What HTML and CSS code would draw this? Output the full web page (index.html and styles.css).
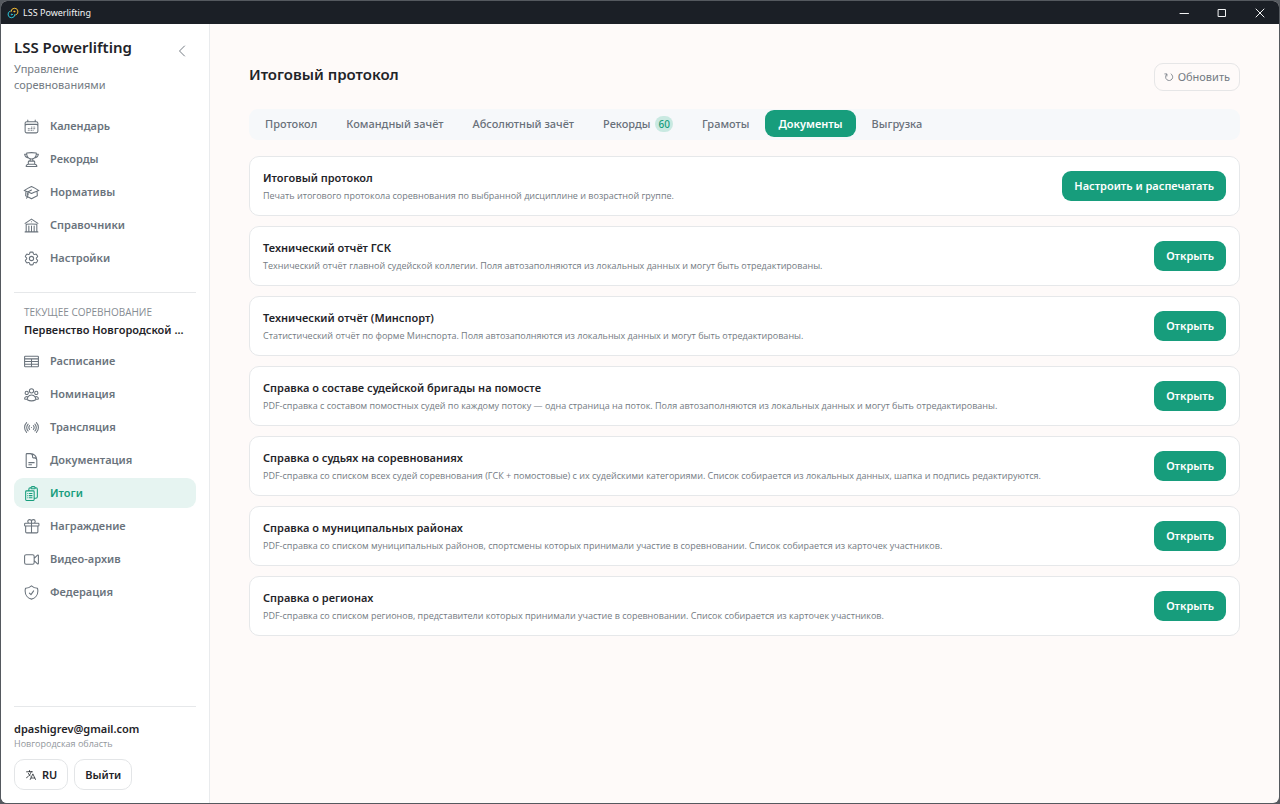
FILE: index.html
```html
<!DOCTYPE html>
<html lang="ru">
  <head>
    <meta charset="utf-8">
    <title>LSS Powerlifting</title>
    <link rel="stylesheet" href="styles.css">
  </head>
  <body>
    <div class="window">
      <header class="titlebar">
        <svg class="app-logo" viewBox="0 0 24 24">
          <path stroke="#f5bd35" d="M8 9a7 7 0 1 1 9.500 7"/>
          <path stroke="#2bc4d8" d="M16 15A7 7 0 1 1 6.500 8"/>
          <circle cx="14.500" cy="9" r="1" stroke="#f5bd35"/>
          <circle cx="9.500" cy="15" r="1" stroke="#2bc4d8"/>
        </svg>
        <span class="app-name">LSS Powerlifting</span>
        <div class="window-buttons">
          <button class="window-button" aria-label="Свернуть">
            <svg viewBox="0 0 10 10"><path d="M1 5.500h8.500"/></svg>
          </button>
          <button class="window-button" aria-label="Развернуть">
            <svg viewBox="0 0 10 10"><path d="M1.500 1.500h7v7h-7z"/></svg>
          </button>
          <button class="window-button" aria-label="Закрыть">
            <svg viewBox="0 0 10 10"><path d="M1 1l8 8M9 1L1 9"/></svg>
          </button>
        </div>
      </header>

      <div class="layout">
        <aside class="sidebar">
          <div class="brand">
            <div>
              <div class="brand-name">LSS Powerlifting</div>
              <div class="brand-text">Управление соревнованиями</div>
            </div>
            <button class="collapse-button" aria-label="Скрыть меню">
              <svg viewBox="0 0 24 24"><path d="M15.750 19.500 8.250 12l7.500-7.500"/></svg>
            </button>
          </div>

          <nav class="menu">
            <a class="menu-link" href="#">
              <svg viewBox="0 0 24 24"><path d="M6.75 3v2.25M17.25 3v2.25M3 18.75V7.5a2.25 2.25 0 0 1 2.25-2.25h13.5A2.25 2.25 0 0 1 21 7.5v11.25m-18 0A2.25 2.25 0 0 0 5.25 21h13.5A2.25 2.25 0 0 0 21 18.75m-18 0v-7.5A2.25 2.25 0 0 1 5.25 9h13.5A2.25 2.25 0 0 1 21 11.25v7.5"/><path d="M12 12.75h.01M12 15h.01M12 17.25h.01M9.75 15h.01M9.75 17.25h.01M7.5 15h.01M7.5 17.25h.01M14.25 12.75h.01M14.25 15h.01M14.25 17.25h.01M16.5 12.75h.01M16.5 15h.01"/></svg>
              Календарь
            </a>
            <a class="menu-link" href="#">
              <svg viewBox="0 0 24 24"><path d="M16.5 18.75h-9m9 0a3 3 0 0 1 3 3h-15a3 3 0 0 1 3-3m9 0v-3.375c0-.621-.503-1.125-1.125-1.125h-.871M7.5 18.75v-3.375c0-.621.504-1.125 1.125-1.125h.872m5.007 0H9.497m5.007 0a7.454 7.454 0 0 1-.982-3.172M9.497 14.25a7.454 7.454 0 0 0 .981-3.172M5.25 4.236c-.982.143-1.954.317-2.916.52A6.003 6.003 0 0 0 7.73 9.728M5.25 4.236V4.5c0 2.108.966 3.99 2.48 5.228M5.25 4.236V2.721C7.456 2.41 9.71 2.25 12 2.25c2.291 0 4.545.16 6.75.47v1.516M7.73 9.728a6.726 6.726 0 0 0 2.748 1.35m8.272-6.842V4.5c0 2.108-.966 3.99-2.48 5.228m2.48-5.492a46.32 46.32 0 0 1 2.916.52 6.003 6.003 0 0 1-5.395 4.972m0 0a6.726 6.726 0 0 1-2.749 1.35m0 0a6.772 6.772 0 0 1-3.044 0"/></svg>
              Рекорды
            </a>
            <a class="menu-link" href="#">
              <svg viewBox="0 0 24 24"><path d="M4.26 10.147a60.438 60.438 0 0 0-.491 6.347A48.62 48.62 0 0 1 12 20.904a48.62 48.62 0 0 1 8.232-4.41 60.46 60.46 0 0 0-.491-6.347m-15.482 0a50.636 50.636 0 0 0-2.658-.813A59.906 59.906 0 0 1 12 3.493a59.903 59.903 0 0 1 10.399 5.84c-.896.248-1.783.52-2.658.814m-15.482 0A50.717 50.717 0 0 1 12 13.489a50.702 50.702 0 0 1 7.74-3.342M6.75 15a.75.75 0 1 0 0-1.5.75.75 0 0 0 0 1.5Zm0 0v-3.675A55.378 55.378 0 0 1 12 8.443m-7.007 11.55A5.981 5.981 0 0 0 6.75 15.75v-1.5"/></svg>
              Нормативы
            </a>
            <a class="menu-link" href="#">
              <svg viewBox="0 0 24 24"><path d="M12 21v-8.25M15.75 21v-8.25M8.25 21v-8.25M3 9l9-6 9 6m-1.5 12V10.332A48.36 48.36 0 0 0 12 9.75c-2.551 0-5.056.2-7.5.582V21M3 21h18M12 6.75h.008v.008H12V6.75Z"/></svg>
              Справочники
            </a>
            <a class="menu-link" href="#">
              <svg viewBox="0 0 24 24"><path d="M9.594 3.94c.09-.542.56-.94 1.11-.94h2.593c.55 0 1.02.398 1.11.94l.213 1.281c.063.374.313.686.645.87.074.04.147.083.22.127.325.196.72.257 1.075.124l1.217-.456a1.125 1.125 0 0 1 1.37.49l1.296 2.247a1.125 1.125 0 0 1-.26 1.431l-1.003.827c-.293.241-.438.613-.43.992a7.723 7.723 0 0 1 0 .255c-.008.378.137.75.43.991l1.004.827c.424.35.534.955.26 1.43l-1.298 2.247a1.125 1.125 0 0 1-1.369.491l-1.217-.456c-.355-.133-.75-.072-1.076.124a6.47 6.47 0 0 1-.22.128c-.331.183-.581.495-.644.869l-.213 1.281c-.09.543-.56.94-1.11.94h-2.594c-.55 0-1.019-.398-1.11-.94l-.213-1.281c-.062-.374-.312-.686-.644-.87a6.52 6.52 0 0 1-.22-.127c-.325-.196-.72-.257-1.076-.124l-1.217.456a1.125 1.125 0 0 1-1.369-.49l-1.297-2.247a1.125 1.125 0 0 1 .26-1.431l1.004-.827c.292-.24.437-.613.43-.991a6.932 6.932 0 0 1 0-.255c.007-.38-.138-.751-.43-.992l-1.004-.827a1.125 1.125 0 0 1-.26-1.43l1.297-2.247a1.125 1.125 0 0 1 1.37-.491l1.216.456c.356.133.751.072 1.076-.124.072-.044.146-.086.22-.128.332-.183.582-.495.644-.869l.214-1.28Z"/><path d="M15 12a3 3 0 1 1-6 0 3 3 0 0 1 6 0Z"/></svg>
              Настройки
            </a>
          </nav>

          <div class="current">
            <div class="current-label">Текущее соревнование</div>
            <div class="current-name">Первенство Новгородской ...</div>
          </div>

          <nav class="menu">
            <a class="menu-link" href="#">
              <svg viewBox="0 0 24 24"><path d="M2.250 5.500c0-.6.500-1 1-1h17.500c.6 0 1 .4 1 1v13c0 .6-.4 1-1 1H3.250c-.6 0-1-.4-1-1zM2.250 8.250h19.500M2.250 12h19.500M2.250 15.750h19.500M12 8.250V19.500"/></svg>
              Расписание
            </a>
            <a class="menu-link" href="#">
              <svg viewBox="0 0 24 24"><path d="M18 18.72a9.094 9.094 0 0 0 3.741-.479 3 3 0 0 0-4.682-2.72m.94 3.198.001.031c0 .225-.012.447-.037.666A11.944 11.944 0 0 1 12 21c-2.17 0-4.207-.576-5.963-1.584A6.062 6.062 0 0 1 6 18.719m12 0a5.971 5.971 0 0 0-.941-3.197m0 0A5.995 5.995 0 0 0 12 12.75a5.995 5.995 0 0 0-5.058 2.772m0 0a3 3 0 0 0-4.681 2.72 8.986 8.986 0 0 0 3.74.477m.94-3.197a5.971 5.971 0 0 0-.94 3.197M15 6.75a3 3 0 1 1-6 0 3 3 0 0 1 6 0Zm6 3a2.25 2.25 0 1 1-4.5 0 2.25 2.25 0 0 1 4.5 0Zm-13.5 0a2.25 2.25 0 1 1-4.5 0 2.25 2.25 0 0 1 4.5 0Z"/></svg>
              Номинация
            </a>
            <a class="menu-link" href="#">
              <svg viewBox="0 0 24 24"><path d="M9.348 14.652a3.75 3.75 0 0 1 0-5.304m5.304 0a3.75 3.75 0 0 1 0 5.304m-7.425 2.121a6.75 6.75 0 0 1 0-9.546m9.546 0a6.75 6.75 0 0 1 0 9.546M5.106 18.894c-3.808-3.807-3.808-9.98 0-13.788m13.788 0c3.808 3.807 3.808 9.98 0 13.788M12 12h.008v.008H12V12Z"/></svg>
              Трансляция
            </a>
            <a class="menu-link" href="#">
              <svg viewBox="0 0 24 24"><path d="M19.5 14.25v-2.625a3.375 3.375 0 0 0-3.375-3.375h-1.5A1.125 1.125 0 0 1 13.5 7.125v-1.5a3.375 3.375 0 0 0-3.375-3.375H8.25m0 12.75h7.5m-7.5 3H12M10.5 2.25H5.625c-.621 0-1.125.504-1.125 1.125v17.25c0 .621.504 1.125 1.125 1.125h12.75c.621 0 1.125-.504 1.125-1.125V11.25a9 9 0 0 0-9-9Z"/></svg>
              Документация
            </a>
            <a class="menu-link active" href="#">
              <svg viewBox="0 0 24 24"><path d="M9 12h3.75M9 15h3.75M9 18h3.75m3 .75H18a2.25 2.25 0 0 0 2.25-2.25V6.108c0-1.135-.845-2.098-1.976-2.192a48.424 48.424 0 0 0-1.123-.08m-5.801 0c-.065.21-.1.433-.1.664 0 .414.336.75.75.75h4.5a.75.75 0 0 0 .75-.75 2.25 2.25 0 0 0-.1-.664m-5.8 0A2.251 2.251 0 0 1 13.5 2.25H15c1.012 0 1.867.668 2.15 1.586m-5.8 0c-.376.023-.75.05-1.124.08C9.095 4.01 8.25 4.973 8.25 6.108V8.25m0 0H4.875c-.621 0-1.125.504-1.125 1.125v11.25c0 .621.504 1.125 1.125 1.125h9.75c.621 0 1.125-.504 1.125-1.125V9.375c0-.621-.504-1.125-1.125-1.125H8.25ZM6.75 12h.008v.008H6.75V12Zm0 3h.008v.008H6.75V15Zm0 3h.008v.008H6.75V18Z"/></svg>
              Итоги
            </a>
            <a class="menu-link" href="#">
              <svg viewBox="0 0 24 24"><path d="M21 11.25v8.25a1.5 1.5 0 0 1-1.5 1.5H5.25a1.5 1.5 0 0 1-1.5-1.5v-8.25M12 4.875A2.625 2.625 0 1 0 9.375 7.5H12m0-2.625V7.5m0-2.625A2.625 2.625 0 1 1 14.625 7.5H12m0 0V21m-8.625-9.75h18c.621 0 1.125-.504 1.125-1.125v-1.5c0-.621-.504-1.125-1.125-1.125h-18c-.621 0-1.125.504-1.125 1.125v1.5c0 .621.504 1.125 1.125 1.125Z"/></svg>
              Награждение
            </a>
            <a class="menu-link" href="#">
              <svg viewBox="0 0 24 24"><path d="m15.75 10.5 4.72-4.72a.75.75 0 0 1 1.28.53v11.38a.75.75 0 0 1-1.28.53l-4.72-4.72M4.5 18.75h9a2.25 2.25 0 0 0 2.25-2.25v-9a2.25 2.25 0 0 0-2.25-2.25h-9A2.25 2.25 0 0 0 2.25 7.5v9a2.25 2.25 0 0 0 2.25 2.25Z"/></svg>
              Видео-архив
            </a>
            <a class="menu-link" href="#">
              <svg viewBox="0 0 24 24"><path d="M9 12.75 11.25 15 15 9.75m-3-7.036A11.959 11.959 0 0 1 3.598 6 11.99 11.99 0 0 0 3 9.749c0 5.592 3.824 10.29 9 11.623 5.176-1.332 9-6.03 9-11.622 0-1.31-.21-2.571-.598-3.751h-.152c-3.196 0-6.1-1.248-8.25-3.285Z"/></svg>
              Федерация
            </a>
          </nav>

          <div class="user">
            <div class="user-email">dpashigrev@gmail.com</div>
            <div class="user-region">Новгородская область</div>
            <div class="user-buttons">
              <button class="user-button">
                <svg viewBox="0 0 24 24"><path d="m10.5 21 5.25-11.25L21 21m-9-3h7.5M3 5.621a48.474 48.474 0 0 1 6-.371m0 0c1.12 0 2.233.038 3.334.114M9 5.25V3m3.334 2.364C11.176 10.658 7.69 15.08 3 17.502m9.334-12.138c.896.061 1.785.147 2.666.257m-4.589 8.495a18.023 18.023 0 0 1-3.827-5.802"/></svg>
                RU
              </button>
              <button class="user-button">Выйти</button>
            </div>
          </div>
        </aside>

        <main class="content">
          <div class="page-header">
            <h1>Итоговый протокол</h1>
            <button class="refresh-button">
              <svg viewBox="0 0 12 12"><path d="M8.500 2.300A4.300 4.300 0 1 1 3 3M1 2.300h2.500v2.500"/></svg>
              Обновить
            </button>
          </div>

          <div class="tabs">
            <button class="tab">Протокол</button>
            <button class="tab">Командный зачёт</button>
            <button class="tab">Абсолютный зачёт</button>
            <button class="tab">Рекорды <span class="badge">60</span></button>
            <button class="tab">Грамоты</button>
            <button class="tab active">Документы</button>
            <button class="tab">Выгрузка</button>
          </div>

          <div class="cards">
            <section class="card">
              <div>
                <h2>Итоговый протокол</h2>
                <p>Печать итогового протокола соревнования по выбранной дисциплине и возрастной группе.</p>
              </div>
              <button class="card-button">Настроить и распечатать</button>
            </section>
            <section class="card">
              <div>
                <h2>Технический отчёт ГСК</h2>
                <p>Технический отчёт главной судейской коллегии. Поля автозаполняются из локальных данных и могут быть отредактированы.</p>
              </div>
              <button class="card-button">Открыть</button>
            </section>
            <section class="card">
              <div>
                <h2>Технический отчёт (Минспорт)</h2>
                <p>Статистический отчёт по форме Минспорта. Поля автозаполняются из локальных данных и могут быть отредактированы.</p>
              </div>
              <button class="card-button">Открыть</button>
            </section>
            <section class="card">
              <div>
                <h2>Справка о составе судейской бригады на помосте</h2>
                <p>PDF-справка с составом помостных судей по каждому потоку — одна страница на поток. Поля автозаполняются из локальных данных и могут быть отредактированы.</p>
              </div>
              <button class="card-button">Открыть</button>
            </section>
            <section class="card">
              <div>
                <h2>Справка о судьях на соревнованиях</h2>
                <p>PDF-справка со списком всех судей соревнования (ГСК + помостовые) с их судейскими категориями. Список собирается из локальных данных, шапка и подпись редактируются.</p>
              </div>
              <button class="card-button">Открыть</button>
            </section>
            <section class="card">
              <div>
                <h2>Справка о муниципальных районах</h2>
                <p>PDF-справка со списком муниципальных районов, спортсмены которых принимали участие в соревновании. Список собирается из карточек участников.</p>
              </div>
              <button class="card-button">Открыть</button>
            </section>
            <section class="card">
              <div>
                <h2>Справка о регионах</h2>
                <p>PDF-справка со списком регионов, представители которых принимали участие в соревновании. Список собирается из карточек участников.</p>
              </div>
              <button class="card-button">Открыть</button>
            </section>
          </div>
        </main>
      </div>
    </div>
  </body>
</html>
```

FILE: styles.css
```css
* {
  box-sizing: border-box;
}

body {
  margin: 0;
  padding: 1px;
  min-height: 100vh;
  display: flex;
  background-color: #55595f;
  color: #1f2429;
  font-family: "Noto Sans", sans-serif;
  font-size: 11px;
  line-height: 16px;
}

h1, h2, p {
  margin: 0;
}

button {
  font: inherit;
  color: inherit;
  cursor: pointer;
}

svg {
  flex: none;
  fill: none;
  stroke: currentColor;
  stroke-width: 1.5;
  stroke-linecap: round;
  stroke-linejoin: round;
}

.window {
  flex: 1;
  display: flex;
  flex-direction: column;
  border-radius: 6px;
  overflow: hidden;
  background-color: #fefaf9;
}

/* title bar */

.titlebar {
  display: flex;
  align-items: center;
  height: 23px;
  padding-left: 6px;
  gap: 4px;
  background-color: #1b1f26;
  color: #f2f3f4;
}

.app-logo {
  width: 12px;
  height: 12px;
  stroke-width: 2;
}

.app-name {
  font-size: 9px;
}

.window-buttons {
  display: flex;
  margin-left: auto;
}

.window-button {
  display: flex;
  align-items: center;
  justify-content: center;
  width: 38px;
  height: 23px;
  padding: 0;
  border: none;
  background-color: transparent;
}

.window-button svg {
  width: 10px;
  height: 10px;
  stroke-width: 1;
}

/* sidebar */

.layout {
  flex: 1;
  display: flex;
}

.sidebar {
  flex: none;
  display: flex;
  flex-direction: column;
  width: 209px;
  padding: 12px 13px 13px;
  background-color: white;
  border-right: 1px solid #e9ebed;
}

.brand {
  display: flex;
  justify-content: space-between;
  margin-bottom: 18px;
}

.brand-name {
  margin-bottom: 3px;
  font-size: 15px;
  font-weight: 600;
  line-height: 22px;
}

.brand-text {
  width: 120px;
  color: #747b83;
}

.collapse-button {
  display: flex;
  align-items: center;
  justify-content: center;
  width: 28px;
  height: 30px;
  padding: 0;
  border: none;
  background-color: transparent;
  color: #747b83;
}

.collapse-button svg {
  width: 16px;
  height: 16px;
}

.menu {
  display: flex;
  flex-direction: column;
  gap: 3px;
}

.menu-link {
  display: flex;
  align-items: center;
  gap: 10px;
  height: 30px;
  padding: 0 9px;
  border-radius: 9px;
  color: #6a737c;
  font-weight: 600;
  text-decoration: none;
}

.menu-link svg {
  width: 17px;
  height: 17px;
}

.menu-link.active {
  background-color: #e6f4f1;
  color: #179d7c;
}

.current {
  margin: 19px 0 6px;
  padding: 11px 10px 0;
  border-top: 1px solid #e6e8ea;
}

.current-label {
  color: #868c93;
  font-family: "Open Sans", "Noto Sans", sans-serif;
  font-size: 10px;
  font-weight: 500;
  text-transform: uppercase;
}

.current-name {
  overflow: hidden;
  white-space: nowrap;
  text-overflow: ellipsis;
  font-weight: 600;
  line-height: 20px;
}

.user {
  margin-top: auto;
  padding-top: 14px;
  border-top: 1px solid #e6e8ea;
}

.user-email {
  font-weight: 600;
}

.user-region {
  color: #92979c;
  font-family: "Open Sans", "Noto Sans", sans-serif;
  font-size: 9px;
  line-height: 14px;
}

.user-buttons {
  display: flex;
  gap: 6px;
  margin-top: 8px;
}

.user-button {
  display: flex;
  align-items: center;
  gap: 5px;
  height: 31px;
  padding: 0 10px;
  border: 1px solid #e3e5e7;
  border-radius: 10px;
  background-color: white;
  font-weight: 600;
}

.user-button svg {
  width: 12px;
  height: 12px;
}

/* page */

.content {
  flex: 1;
  min-width: 0;
  padding: 39px 39px 20px;
}

.page-header {
  display: flex;
  align-items: flex-start;
  justify-content: space-between;
  margin-bottom: 18px;
}

h1 {
  font-size: 15px;
  font-weight: 600;
  line-height: 22px;
}

.refresh-button {
  display: flex;
  align-items: center;
  gap: 4px;
  height: 28px;
  padding: 0 9px;
  border: 1px solid #e6e6e7;
  border-radius: 9px;
  background-color: transparent;
  color: #747b83;
}

.refresh-button svg {
  width: 10px;
  height: 10px;
  stroke-width: 1;
}

.tabs {
  display: flex;
  gap: 3px;
  margin-bottom: 16px;
  padding: 1px 3px 3px;
  border-radius: 9px;
  background-color: #f6f8fa;
}

.tab {
  display: flex;
  align-items: center;
  gap: 5px;
  height: 27px;
  padding: 0 13px;
  border: none;
  border-radius: 9px;
  background-color: transparent;
  color: #69717a;
  font-weight: 500;
}

.tab.active {
  background-color: #179d7c;
  color: white;
  font-weight: 600;
}

.badge {
  padding: 0 3px;
  border-radius: 8px;
  background-color: #c9e9e1;
  color: #179d7c;
  font-size: 10px;
}

.cards {
  display: flex;
  flex-direction: column;
  gap: 10px;
}

.card {
  display: flex;
  align-items: center;
  justify-content: space-between;
  gap: 13px;
  min-height: 60px;
  padding: 11px 13px;
  border: 1px solid #e6e8ea;
  border-radius: 10px;
  background-color: white;
}

h2 {
  font-size: 11px;
  font-weight: 600;
  line-height: 20px;
}

.card p {
  color: #747b83;
  font-family: "Open Sans", "Noto Sans", sans-serif;
  font-size: 9px;
}

.card-button {
  flex: none;
  height: 30px;
  padding: 0 12px;
  border: none;
  border-radius: 9px;
  background-color: #179d7c;
  color: white;
  font-weight: 600;
}
```
